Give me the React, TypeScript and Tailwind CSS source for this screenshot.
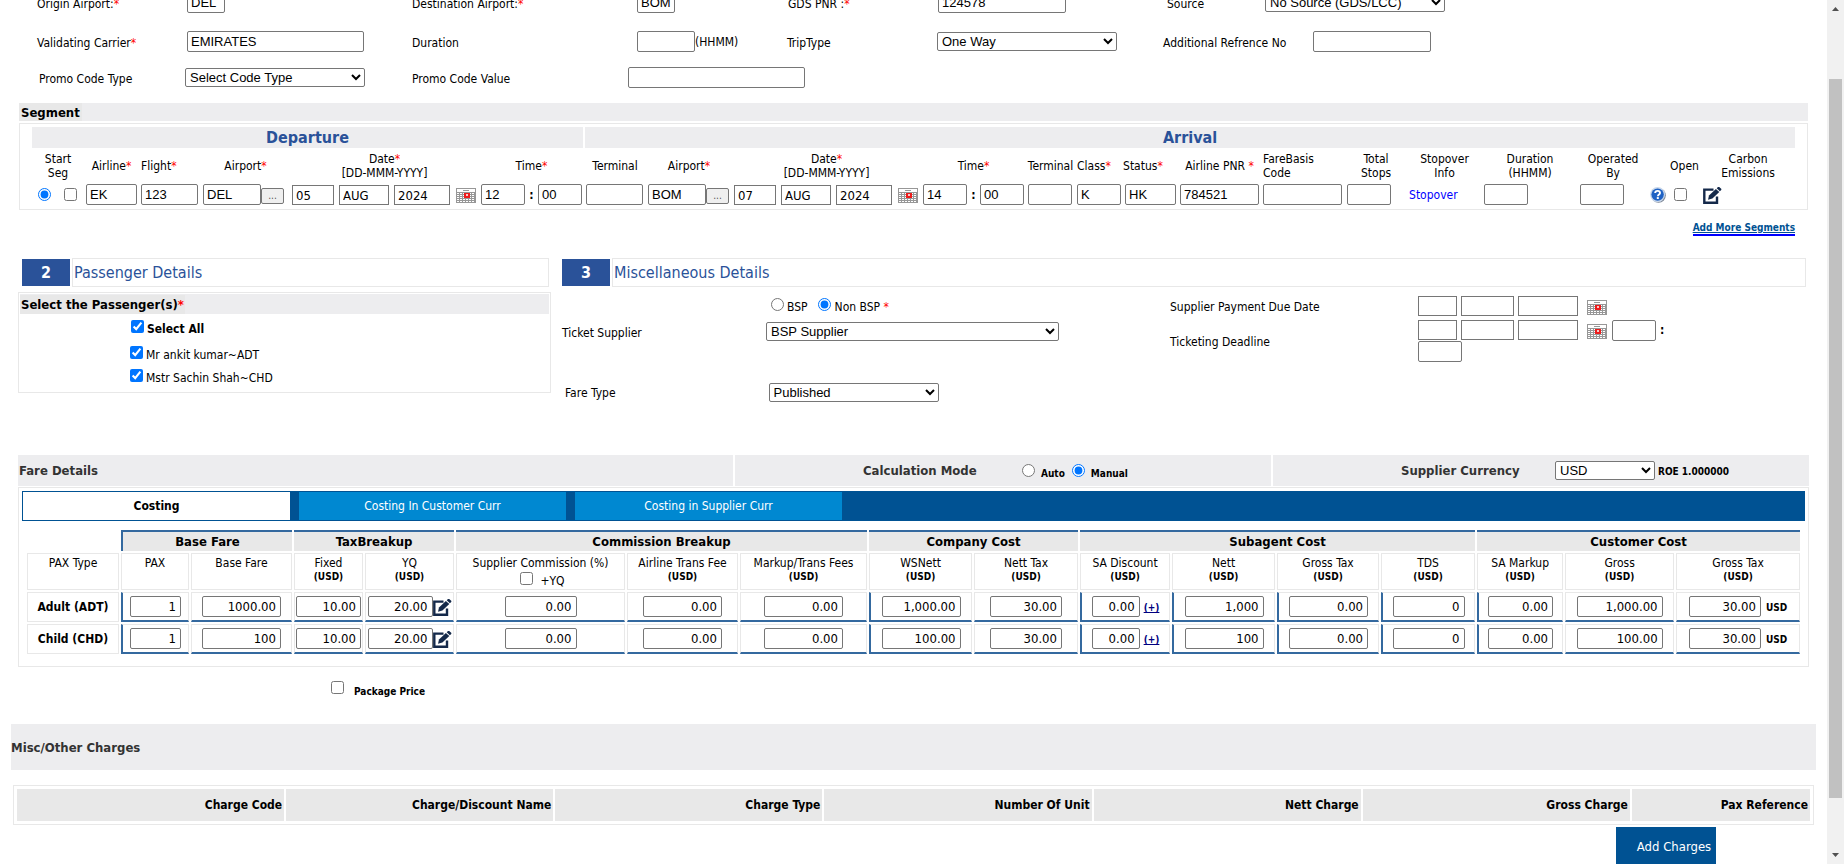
import React from "react";

const cx = (...parts: (string | false | undefined)[]) => parts.filter(Boolean).join(" ");

const round = "h-[21px] rounded-[2px] border border-[#767676] bg-white px-[3px] font-['Liberation_Sans',sans-serif] text-[13px] text-black";
const square = "h-5 border border-[#767676] bg-white px-[3px] text-[13px] text-black";
const drop = "h-[19px] rounded-[2px] border border-[#767676] bg-white font-['Liberation_Sans',sans-serif] text-[13px] text-black";
const tick = "m-0 block size-[13px] shrink-0";

function Star() {
  return <span className="text-[#ff0000]">*</span>;
}

function CalendarIcon() {
  return (
    <svg width="20" height="15" viewBox="0 0 20 15" shapeRendering="crispEdges" aria-hidden="true">
      <rect x="0" y="0" width="20" height="15" fill="#979797" />
      <rect x="1" y="1" width="18" height="3" fill="#fff" />
      <rect x="7" y="2" width="6" height="1" fill="#979797" />
      {[5, 7, 9, 11, 13].map((y) =>
        [1, 4, 7, 10, 13, 16].map((x) => <rect key={`${x}-${y}`} x={x} y={y} width="2" height="1" fill="#fff" />)
      )}
      <rect x="8" y="5" width="6" height="5" fill="#ee1c1c" />
      <rect x="10" y="6" width="2" height="2" fill="#f6c9c9" />
    </svg>
  );
}

function EditIcon() {
  return (
    <svg width="19" height="17" viewBox="0 0 19 17" aria-hidden="true">
      <path d="M10.5 2.6H1.3V15.7H14V9.5" fill="none" stroke="#14294a" strokeWidth="2.4" />
      <path d="M5 12.8l1-4.4 6.9-6.5 3.4 3.2-6.9 6.5z" fill="#14294a" />
      <path d="M13.7 1.2L15 0c.4-.3.9-.3 1.2 0l2 1.8c.3.3.3.8 0 1.2l-1.3 1.3z" fill="#14294a" />
    </svg>
  );
}

function HelpIcon() {
  return (
    <svg width="16" height="16" viewBox="0 0 16 16" role="img" aria-label="Help">
      <circle cx="8.5" cy="8.5" r="7.3" fill="#7d8796" />
      <circle cx="7.6" cy="7.6" r="7.5" fill="#c9d8ec" />
      <circle cx="7.6" cy="7.6" r="6.2" fill="#1f62c4" />
      <path d="M5.2 6.1c0-1.4 1-2.2 2.4-2.2s2.4.8 2.4 2c0 1.7-2.1 1.7-2.1 3.3" fill="none" stroke="#fff" strokeWidth="1.9" />
      <rect x="6.8" y="10.1" width="2" height="1.9" fill="#fff" />
    </svg>
  );
}

function TextField({ label, value = "", className, kind = round }: { label: string; value?: string; className: string; kind?: string }) {
  return <input type="text" aria-label={label} defaultValue={value} className={cx(kind, className)} />;
}

function CalendarButton({ label, className }: { label: string; className?: string }) {
  return (
    <button type="button" aria-label={label} className={cx("block shrink-0", className)}>
      <CalendarIcon />
    </button>
  );
}

function ItineraryForm() {
  return (
    <div className="leading-[14px] [&_label]:pt-0.5">
      <div className="grid h-[21px] grid-cols-[150fr_225fr_225fr_151fr_150fr_229fr_98fr_562fr] items-center pl-[37px]">
        <label htmlFor="origin">Origin Airport:<Star /></label>
        <div className="flex"><input id="origin" defaultValue="DEL" className={cx(round, "w-[38px]")} /></div>
        <label htmlFor="destination">Destination Airport:<Star /></label>
        <div className="flex"><input id="destination" defaultValue="BOM" className={cx(round, "w-[38px]")} /></div>
        <label htmlFor="pnr">GDS PNR :<Star /></label>
        <div className="flex"><input id="pnr" defaultValue="124578" className={cx(round, "w-[128px]")} /></div>
        <label htmlFor="source">Source</label>
        <div className="flex">
          <select id="source" className={cx(drop, "w-[180px]")}><option>No Source (GDS/LCC)</option></select>
        </div>
      </div>
      <div className="mt-[18px] grid h-[21px] grid-cols-[150fr_225fr_225fr_150fr_150fr_226fr_150fr_514fr] items-center pl-[37px]">
        <label htmlFor="carrier">Validating Carrier<Star /></label>
        <div className="flex"><input id="carrier" defaultValue="EMIRATES" className={cx(round, "w-[177px]")} /></div>
        <label htmlFor="duration">Duration</label>
        <div className="flex items-center"><input id="duration" className={cx(round, "w-[58px]")} />(HHMM)</div>
        <label htmlFor="trip">TripType</label>
        <div className="flex">
          <select id="trip" className={cx(drop, "w-[180px]")}><option>One Way</option></select>
        </div>
        <label htmlFor="reference">Additional Refrence No</label>
        <div className="flex"><input id="reference" className={cx(round, "w-[118px]")} /></div>
      </div>
      <div className="mt-[15px] grid h-[21px] grid-cols-[146fr_227fr_216fr_1199fr] items-center pl-[39px]">
        <label htmlFor="promo-type">Promo Code Type</label>
        <div className="flex">
          <select id="promo-type" className={cx(drop, "w-[180px]")}><option>Select Code Type</option></select>
        </div>
        <label htmlFor="promo-value">Promo Code Value</label>
        <div className="flex"><input id="promo-value" className={cx(round, "w-[177px]")} /></div>
      </div>
    </div>
  );
}

const segmentColumns = [
  "w-[52px]", "w-[55px]", "w-[62px]", "w-[89px]", "w-[189px]", "w-[105px]", "w-[62px]", "w-[86px]",
  "w-[189px]", "w-[105px]", "w-[49px]", "w-[48px]", "w-[55px]", "w-[83px]", "w-[84px]", "w-[62px]",
  "w-[75px]", "w-[96px]", "w-[70px]", "w-[20px]", "w-[33px]", "w-[94px]",
];

function AirportCell({ label, code, width }: { label: string; code: string; width: string }) {
  return (
    <div className="flex items-center">
      <TextField label={label} value={code} className={width} />
      <button
        type="button"
        aria-label={`Find ${label}`}
        className="mt-0.5 h-4 w-[23px] rounded-[2px] border border-[#767676] bg-[#efefef] text-[10px] leading-[12px] text-[#555]"
      >
        ...
      </button>
    </div>
  );
}

function DateCell({ label, day }: { label: string; day: string }) {
  return (
    <div className="flex h-[21px] items-end gap-[5px]">
      <TextField label={`${label} day`} value={day} kind={square} className="w-[42px]" />
      <TextField label={`${label} month`} value="AUG" kind={square} className="w-[50px]" />
      <TextField label={`${label} year`} value="2024" kind={square} className="w-14" />
      <CalendarButton label={`Pick ${label}`} className="mb-0.5 ml-px" />
    </div>
  );
}

function TimeCell({ label, hour }: { label: string; hour: string }) {
  return (
    <div className="flex items-center">
      <TextField label={`${label} hour`} value={hour} className="w-11" />
      <b className="w-[13px] text-center">:</b>
      <TextField label={`${label} minute`} value="00" className="w-11" />
    </div>
  );
}

function SegmentSection() {
  return (
    <section className="mr-[19px] ml-[19px]">
      <h2 className="mt-[15px] flex h-[18px] bg-[#ededef] text-[13px] leading-[19px] font-bold">
        <span className="bg-[#e8e8e8] px-0.5">Segment</span>
      </h2>
      <div className="mt-0.5 h-[87px] border border-[#e8e8e8] pt-[3px] pr-3 pl-3">
        <table className="w-full table-fixed border-collapse">
          <colgroup>{segmentColumns.map((w, i) => <col key={i} className={w} />)}</colgroup>
          <thead>
            <tr className="h-[21px] bg-[#ededef] text-[16px] leading-[21px] text-[#2a5299]">
              <th colSpan={6} className="border-r-2 border-white p-0">Departure</th>
              <th colSpan={16} className="p-0">Arrival</th>
            </tr>
            <tr className="h-[35px] leading-[14px] [&>th]:p-0 [&>th]:font-normal">
              <th>Start<br />Seg</th>
              <th>Airline<Star /></th>
              <th className="text-left"><span className="pl-0.5">Flight<Star /></span></th>
              <th>Airport<Star /></th>
              <th>Date<Star /><br />[DD-MMM-YYYY]</th>
              <th>Time<Star /></th>
              <th>Terminal</th>
              <th>Airport<Star /></th>
              <th>Date<Star /><br />[DD-MMM-YYYY]</th>
              <th>Time<Star /></th>
              <th>Terminal</th>
              <th className="text-left"><span className="pl-0.5">Class<Star /></span></th>
              <th className="text-left">Status<Star /></th>
              <th>Airline PNR <Star /></th>
              <th className="text-left"><div className="pl-0.5">FareBasis<br />Code</div></th>
              <th>Total<br />Stops</th>
              <th>Stopover<br />Info</th>
              <th>Duration<br />(HHMM)</th>
              <th>Operated<br />By</th>
              <th />
              <th>Open</th>
              <th>Carbon<br />Emissions</th>
            </tr>
          </thead>
          <tbody>
            <tr className="h-[23px] [&>td]:p-0 [&>td]:pl-0.5">
              <td>
                <div className="flex gap-[13px] pl-1">
                  <input type="radio" aria-label="Start segment" defaultChecked className={tick} />
                  <input type="checkbox" aria-label="Select segment" className={tick} />
                </div>
              </td>
              <td><TextField label="Airline" value="EK" className="block w-[51px]" /></td>
              <td><TextField label="Flight" value="123" className="block w-[57px]" /></td>
              <td><AirportCell label="departure airport" code="DEL" width="w-[58px]" /></td>
              <td><DateCell label="departure date" day="05" /></td>
              <td><TimeCell label="departure" hour="12" /></td>
              <td><TextField label="Departure terminal" className="block w-[57px]" /></td>
              <td><AirportCell label="arrival airport" code="BOM" width="w-[58px]" /></td>
              <td><DateCell label="arrival date" day="07" /></td>
              <td><TimeCell label="arrival" hour="14" /></td>
              <td><TextField label="Arrival terminal" className="block w-11" /></td>
              <td><TextField label="Class" value="K" className="block w-11" /></td>
              <td><TextField label="Status" value="HK" className="block w-[51px]" /></td>
              <td><TextField label="Airline PNR" value="784521" className="block w-[79px]" /></td>
              <td><TextField label="Fare basis code" className="block w-[79px]" /></td>
              <td><TextField label="Total stops" className="block w-11" /></td>
              <td><a href="#stopover" className="text-[#0000ff]">Stopover</a></td>
              <td><TextField label="Duration" className="block w-11" /></td>
              <td><TextField label="Operated by" className="block w-11" /></td>
              <td><HelpIcon /></td>
              <td><input type="checkbox" aria-label="Open" className={cx(tick, "ml-1")} /></td>
              <td><button type="button" aria-label="Edit carbon emissions" className="mt-px block"><EditIcon /></button></td>
            </tr>
          </tbody>
        </table>
      </div>
      <div className="mt-[11px] mr-[13px] flex h-[17px] justify-end">
        <a href="#segments" className="h-[15px] border-b-2 border-[#0000ff] text-[10px] leading-[14px] font-bold text-[#005293] underline">
          Add More Segments
        </a>
      </div>
    </section>
  );
}

function SectionTitle({ step, children }: { step: string; children: React.ReactNode }) {
  return (
    <h2 className="flex h-[29px] items-stretch gap-0.5 text-[16px] leading-[28px] text-[#2a5299]">
      <span className="my-px w-12 bg-[#2a5299] text-center font-bold text-white">{step}</span>
      <span className="flex-1 border border-[#e8e8e8] pl-px">{children}</span>
    </h2>
  );
}

function Passengers() {
  const people = ["Mr ankit kumar~ADT", "Mstr Sachin Shah~CHD"];
  return (
    <section>
      <div className="pr-0.5 pl-1"><SectionTitle step="2">Passenger Details</SectionTitle></div>
      <div className="mt-[5px] h-[101px] border border-[#e8e8e8] p-px">
        <h3 className="flex h-5 items-center bg-[#ededef] text-[13px] leading-[19px] font-bold">
          <span className="bg-[#e8e8e8] px-px">Select the Passenger(s)<Star /></span>
        </h3>
        <label className="mt-1 flex h-[18px] gap-[3px] pl-[111px] font-bold">
          <input type="checkbox" defaultChecked className={cx(tick, "mt-0.5")} />
          <span className="pt-[3px] leading-[16px]">Select All</span>
        </label>
        <div className="mt-2 flex flex-col gap-1">
          {people.map((name) => (
            <label key={name} className="flex h-[19px] gap-[3px] pl-[110px]">
              <input type="checkbox" defaultChecked className={cx(tick, "mt-0.5")} />
              <span className="pt-[3px] leading-[16px]">{name}</span>
            </label>
          ))}
        </div>
      </div>
    </section>
  );
}

function DateBoxes({ label }: { label: string }) {
  return (
    <>
      <TextField label={`${label} day`} kind={square} className="w-[39px]" />
      <TextField label={`${label} month`} kind={square} className="w-[53px]" />
      <TextField label={`${label} year`} kind={square} className="w-[60px]" />
      <CalendarButton label={`Pick ${label}`} className="mt-1 mr-px ml-[5px] self-start" />
    </>
  );
}

function Miscellaneous() {
  return (
    <section>
      <SectionTitle step="3">Miscellaneous Details</SectionTitle>
      <div className="grid grid-cols-[204fr_404fr_248fr_388fr]">
        <label htmlFor="supplier" className="pt-[38px] leading-[16px]">Ticket Supplier</label>
        <div>
          <div className="flex h-[35px] items-center pl-[5px] leading-[16px]">
            <input id="bsp" type="radio" name="bsp" className={cx(tick, "mr-[3px]")} />
            <label htmlFor="bsp" className="pt-1">BSP</label>
            <input id="non-bsp" type="radio" name="bsp" defaultChecked className={cx(tick, "mr-1 ml-[10px]")} />
            <label htmlFor="non-bsp" className="pt-1">Non BSP <Star /></label>
          </div>
          <select id="supplier" className={cx(drop, "block w-[293px]")}><option>BSP Supplier</option></select>
        </div>
        <div className="leading-[16px]">
          <div className="pt-3">Supplier Payment Due Date</div>
          <div className="pt-[19px]">Ticketing Deadline</div>
        </div>
        <div className="pt-[9px]">
          <div className="flex h-6 gap-1"><DateBoxes label="supplier payment due date" /></div>
          <div className="flex h-[21px] gap-1">
            <DateBoxes label="ticketing deadline" />
            <TextField label="Deadline hour" className="w-11" />
            <b className="leading-[20px]">:</b>
          </div>
          <TextField label="Deadline minute" className="block w-11" />
        </div>
      </div>
      <div className="mt-[21px] grid grid-cols-[204fr_1040fr] items-center pl-[3px]">
        <label htmlFor="fare-type" className="leading-[16px]">Fare Type</label>
        <select id="fare-type" className={cx(drop, "block w-[170px]")}><option>Published</option></select>
      </div>
    </section>
  );
}

type Cell = { v: string; w: string; icon?: boolean; plus?: boolean; usd?: boolean; blue?: boolean };

const fareColumns = [
  "w-[92px]", "w-[68px]", "w-[101px]", "w-[69px]", "w-[89px]", "w-[169px]", "w-[111px]", "w-[127px]", "w-[103px]",
  "w-[104px]", "w-[90px]", "w-[103px]", "w-[102px]", "w-[94px]", "w-[86px]", "w-[109px]", "w-[124px]",
];

const groups: [string, number][] = [
  ["Base Fare", 2], ["TaxBreakup", 2], ["Commission Breakup", 3], ["Company Cost", 2], ["Subagent Cost", 4], ["Customer Cost", 3],
];

const heads = [
  "Fixed", "YQ", "", "Airline Trans Fee", "Markup/Trans Fees", "WSNett", "Nett Tax", "SA Discount", "Nett",
  "Gross Tax", "TDS", "SA Markup", "Gross", "Gross Tax",
];

function fareRow(base: string, wsNett: string, nett: string, gross: string): Cell[] {
  return [
    { v: "1", w: "w-[51px]", blue: true },
    { v: base, w: "w-[79px]" },
    { v: "10.00", w: "w-[65px]" },
    { v: "20.00", w: "w-[65px]", icon: true },
    { v: "0.00", w: "w-[72px]" },
    { v: "0.00", w: "w-[79px]" },
    { v: "0.00", w: "w-[79px]" },
    { v: wsNett, w: "w-[79px]", blue: true },
    { v: "30.00", w: "w-[72px]" },
    { v: "0.00", w: "w-[48px]", plus: true, blue: true },
    { v: nett, w: "w-[79px]", blue: true },
    { v: "0.00", w: "w-[79px]", blue: true },
    { v: "0", w: "w-[72px]", blue: true },
    { v: "0.00", w: "w-[65px]", blue: true },
    { v: gross, w: "w-[86px]" },
    { v: "30.00", w: "w-[72px]", usd: true },
  ];
}

const fareRows: [string, Cell[]][] = [
  ["Adult (ADT)", fareRow("1000.00", "1,000.00", "1,000", "1,000.00")],
  ["Child (CHD)", fareRow("100", "100.00", "100", "100.00")],
];

function FareTable() {
  return (
    <table className="w-full table-fixed border-separate border-spacing-x-0.5 border-spacing-y-0.5 text-[12px]">
      <colgroup>{fareColumns.map((w, i) => <col key={i} className={w} />)}</colgroup>
      <thead>
        <tr className="h-[21px] text-[13px] leading-[18px]">
          <td />
          {groups.map(([name, span], i) => (
            <th key={name} colSpan={span} className={cx("border-t-2 border-[#34699f] bg-[#e8e8e8] p-0", i === 0 && "border-l-2")}>
              {name}
            </th>
          ))}
        </tr>
        <tr className="h-[37px] leading-[13px] [&>th]:border [&>th]:border-[#e8e8e8] [&>th]:p-0 [&>th]:pt-[3px] [&>th]:align-top [&>th]:font-normal">
          <th>PAX Type</th>
          <th>PAX</th>
          <th>Base Fare</th>
          {heads.map((name, i) =>
            name ? (
              <th key={i}>{name}<br /><b className="text-[10px]">(USD)</b></th>
            ) : (
              <th key={i}>
                Supplier Commission (%)
                <label className="flex justify-center gap-[7px] pt-0.5 pl-1">
                  <input type="checkbox" className={tick} /><span className="pt-[3px]">+YQ</span>
                </label>
              </th>
            )
          )}
        </tr>
      </thead>
      <tbody>
        {fareRows.map(([name, cells]) => (
          <tr key={name} className="h-[30px]">
            <th className="border border-[#e8e8e8] p-0 text-[12px]">{name}</th>
            {cells.map((c, i) => (
              <td
                key={i}
                className={cx(
                  "border border-b-2 border-[#e8e8e8] border-b-[#34699f] px-0 py-[3px]",
                  c.blue && "border-l-2 border-l-[#34699f]"
                )}
              >
                <div className={cx("flex items-center justify-center", c.plus && "gap-1", c.usd && "gap-[5px]")}>
                  <input
                    type="text"
                    aria-label={`${name} amount ${i + 1}`}
                    defaultValue={c.v}
                    className={cx("h-[21px] shrink-0 rounded-[2px] border border-[#767676] bg-white px-1 text-right text-[13px]", c.w)}
                  />
                  {c.icon && <button type="button" aria-label="Edit tax" className="mt-0.5"><EditIcon /></button>}
                  {c.plus && <a href="#discount" className="pt-0.5 text-[10px] font-bold text-[#000080] underline">(+)</a>}
                  {c.usd && <b className="pt-0.5 text-[10px]">USD</b>}
                </div>
              </td>
            ))}
          </tr>
        ))}
      </tbody>
    </table>
  );
}

function FareDetails() {
  return (
    <section className="mr-[18px] ml-[18px]">
      <div className="grid h-[30px] grid-cols-[715fr_536fr_536fr] gap-0.5 text-[13px] font-bold text-[#333]">
        <h2 className="bg-[#ededef] pl-px leading-[31px]">Fare Details</h2>
        <div className="flex items-center bg-[#ededef] pl-[128px]">
          <span className="w-[159px]">Calculation Mode</span>
          <label className="flex items-center gap-1.5 text-[10px] text-black">
            <input type="radio" name="mode" className={tick} /><span className="pt-1.5">Auto</span>
          </label>
          <label className="ml-[7px] flex items-center gap-1.5 text-[10px] text-black">
            <input type="radio" name="mode" defaultChecked className={tick} /><span className="pt-1.5">Manual</span>
          </label>
        </div>
        <div className="flex items-center bg-[#ededef] pl-[128px]">
          <label htmlFor="currency" className="w-[154px]">Supplier Currency</label>
          <select id="currency" className={cx(drop, "w-[100px] font-normal")}><option>USD</option></select>
          <span className="pt-0.5 pl-[3px] text-[10px] text-black">ROE 1.000000</span>
        </div>
      </div>
      <div className="mt-0.5 h-[180px] border border-[#e8e8e8] pt-[3px]">
        <div role="tablist" className="mx-[3px] flex h-[30px] bg-[#005293] p-px text-[12px]">
          <button type="button" role="tab" aria-selected="true" className="w-[267px] bg-white font-bold text-black">Costing</button>
          <button type="button" role="tab" aria-selected="false" className="ml-[9px] w-[267px] bg-[#0088d1] text-white">Costing In Customer Curr</button>
          <button type="button" role="tab" aria-selected="false" className="ml-[9px] w-[267px] bg-[#0088d1] text-white">Costing in Supplier Curr</button>
        </div>
        <div className="mt-[7px] pr-[7px] pl-1.5"><FareTable /></div>
      </div>
      <label className="mt-[14px] flex gap-[10px] pl-[313px] text-[10px] leading-[14px] font-bold">
        <input type="checkbox" className={tick} /><span className="pt-1">Package Price</span>
      </label>
    </section>
  );
}

function OtherCharges() {
  const columns: [string, string][] = [
    ["Charge Code", "w-[267px]"], ["Charge/Discount Name", "w-[267px]"], ["Charge Type", "w-[267px]"],
    ["Number Of Unit", "w-[267px]"], ["Nett Charge", "w-[267px]"], ["Gross Charge", "w-[267px]"], ["Pax Reference", "w-[178px]"],
  ];
  return (
    <section className="mr-[11px] ml-[11px]">
      <h2 className="mt-[25px] h-[46px] bg-[#ededef] text-[13px] leading-[47px] font-bold text-[#333]">Misc/Other Charges</h2>
      <div className="mx-0.5 mt-[15px] border border-[#e8e8e8] px-px py-px">
        <table className="w-full table-fixed border-separate border-spacing-x-0.5 border-spacing-y-0.5">
          <thead>
            <tr className="h-8 text-[12px]">
              {columns.map(([name, w]) => (
                <th key={name} className={cx("bg-[#e8e8e8] p-0 pr-0.5 text-right", w)}>{name}</th>
              ))}
            </tr>
          </thead>
        </table>
      </div>
      <div className="mt-0.5 flex justify-end pr-[100px]">
        <button type="button" className="h-10 w-[100px] bg-[#005293] pl-4 text-[13px] text-white">Add Charges</button>
      </div>
    </section>
  );
}

function ScrollTrack() {
  return (
    <div className="flex w-[17px] shrink-0 flex-col items-center bg-[#f1f1f1]" aria-hidden="true">
      <svg width="17" height="17" viewBox="0 0 17 17"><path d="M5 11L8.5 7L12 11z" fill="#505050" /></svg>
      <div className="flex w-full flex-1 flex-col items-center">
        <div className="basis-[62px]" />
        <div className="w-[13px] grow-[719] bg-[#c1c1c1]" />
        <div className="grow-[49]" />
      </div>
      <svg width="17" height="17" viewBox="0 0 17 17"><path d="M5 6L8.5 10L12 6z" fill="#505050" /></svg>
    </div>
  );
}

export default function App() {
  return (
    <div className="flex h-screen overflow-hidden bg-white font-['DejaVu_Sans_Condensed','Noto_Sans',sans-serif] text-[12px] text-black">
      <main className="-mt-2 min-w-0 flex-1">
        <ItineraryForm />
        <SegmentSection />
        <div className="mt-5 mr-[21px] mb-[53px] ml-[18px] grid grid-cols-[533fr_1244fr] gap-[11px]">
          <Passengers />
          <Miscellaneous />
        </div>
        <FareDetails />
        <OtherCharges />
      </main>
      <ScrollTrack />
    </div>
  );
}
